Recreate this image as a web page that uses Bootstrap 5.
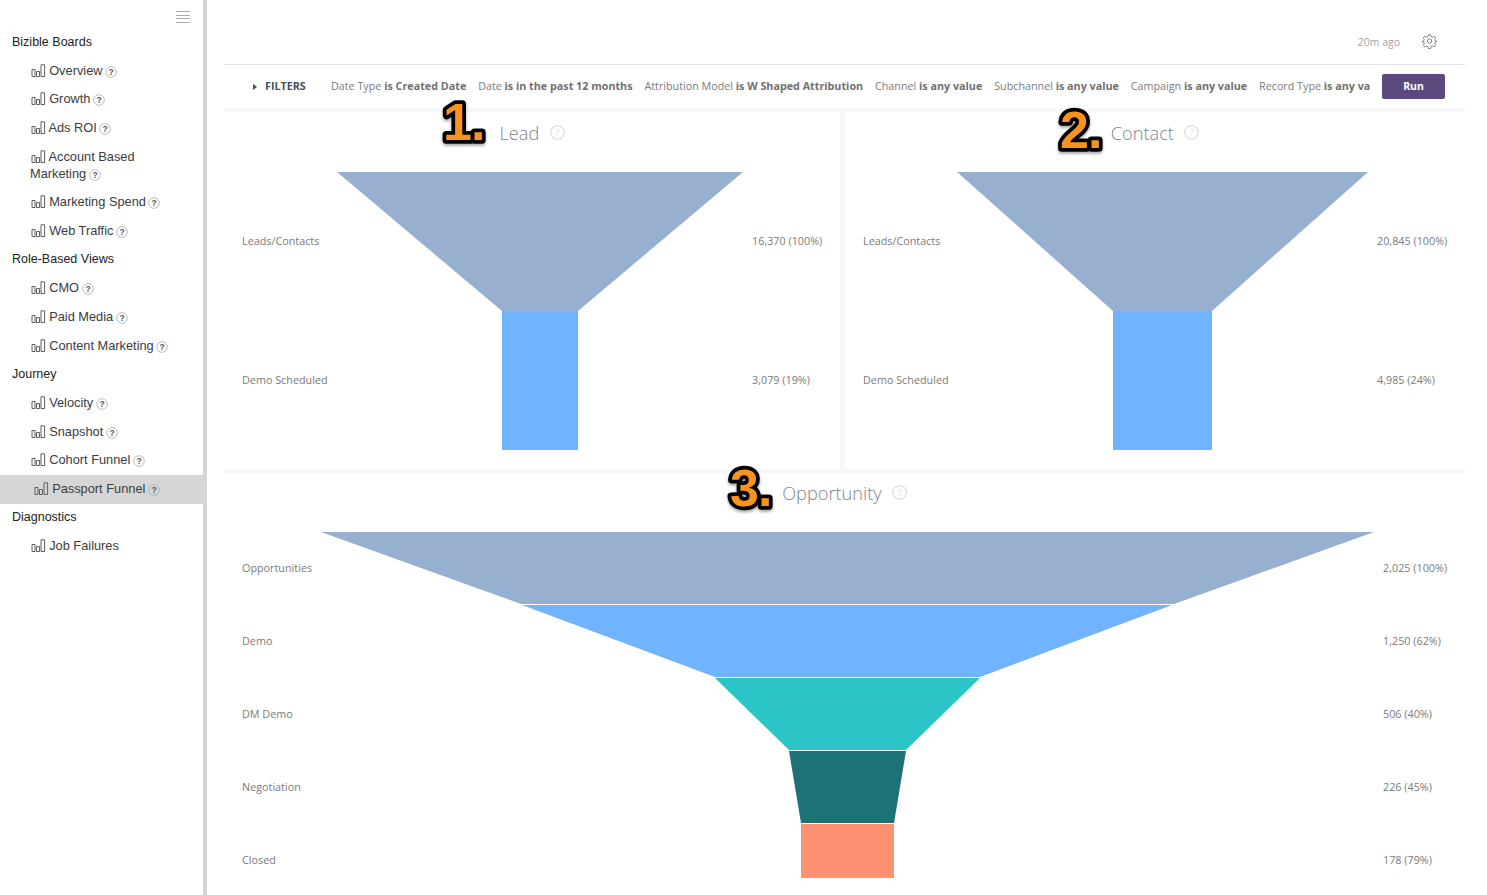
<!DOCTYPE html>
<html lang="en">
<head>
    <meta charset="UTF-8">
    <title>Passport Funnel</title>
    <link href="https://cdn.jsdelivr.net/npm/bootstrap@5.3.0/dist/css/bootstrap.min.css" rel="stylesheet">
    <style>
        body { height: 895px; overflow: hidden; background: #fff; font-family: "Open Sans", sans-serif; color: #7b7b7b; }

        /* sidebar */
        .side { width: 207px; height: 895px; border-right: 4px solid #d6d6d6; font-family: "Liberation Sans", sans-serif; font-size: 12.8px; line-height: 17px; color: #333; flex-shrink: 0; }
        .side-top { height: 28px; padding: 11px 13px 0 0; }
        .side-head { padding: 5.7px 0 6.3px 12px; color: #222; font-size: 12.5px; }
        .side-item { padding: 4.8px 20px 6.8px 30px; color: #3c3c3c; }
        .side-item.active-row { background: #d6d6d6; padding-left: 33px; }
        .bar-ico { width: 15px; height: 13px; vertical-align: -2px; margin-left: 1px; margin-right: -.4px; }
        .help-ico { width: 12px; height: 12px; vertical-align: -3px; margin-left: -1px; }

        /* main */
        .main-area { padding-left: 17px; padding-right: 22px; width: 1280px; }
        .top-strip { height: 65px; border-bottom: 1px solid #e3e3e3; padding: 33px 28px 0 0; font-size: 10.5px; color: #a3a3a3; line-height: 18px; }
        .gear-ico { margin-left: 22px; }
        .filter-strip { height: 43px; padding-left: 29px; padding-right: 20px; font-size: 10.75px; white-space: nowrap; }
        .filter-caret { width: 0; height: 0; border-left: 4px solid #4a4a4a; border-top: 3px solid transparent; border-bottom: 3px solid transparent; margin-right: 8px; }
        .filter-name { font-weight: 700; color: #454f5b; width: 66px; flex-shrink: 0; }
        .filter-list { flex: 1; overflow: hidden; gap: 11.9px; }
        .filter-list b { color: #707070; font-weight: 700; }
        .run-btn { width: 63px; height: 25px; margin-left: 12px; padding: 0; border-radius: 2px; border: 0; background: #5c4a7f; color: #fff; font-size: 10.5px; font-weight: 700; flex-shrink: 0; }

        .gap-band { background: #f6f7f8; }
        .band-top { height: 4px; }
        .two-panels { gap: 5px; height: 357px; }
        .panel { position: relative; background: #fff; }
        .panel-lead { width: 616px; }
        .panel-contact { flex: 1; }
        .panel-title { height: 60px; padding-top: 9px; font-size: 18.2px; line-height: 25px; color: #7f868e; font-weight: 300; }
        .title-help { width: 15px; height: 15px; margin-left: 5.5px; vertical-align: 0; }
        .chart-row { padding-left: 18px; font-size: 10.8px; }
        .chart-col { flex-shrink: 0; }
        .chart-col > div { flex: 1; }
        .col-lead { width: 95px; }
        .col-contact { width: 94px; }
        .col-opp { width: 79px; }
        .val-col { margin-left: 9px; }
        .panel-opp { height: 422px; }
        .panel-opp .panel-title { height: 59px; padding-top: 8px; }

        /* numbered callouts over the panels */
        .callout { position: absolute; width: 60px; height: 60px; overflow: visible; }
        .callout text { font-family: "Liberation Sans", sans-serif; font-weight: 700; font-size: 52px; letter-spacing: -1px; fill: #f7931e; stroke: #000; stroke-width: 7.5px; stroke-linejoin: round; paint-order: stroke fill; filter: drop-shadow(0 2px 1.5px rgba(0,0,0,.35)); }
    </style>
</head>
<body>
    <svg width="0" height="0" class="position-absolute">
        <defs>
            <symbol id="bars" viewBox="0 0 15 13">
                <path d="M1 5.5h3v7H1zM5.5 7.5h3v5h-3zM10 .8h3.6v11.7H10z" fill="none" stroke="#5f5f5f" stroke-width="1"/>
            </symbol>
            <symbol id="help" viewBox="0 0 12 12">
                <circle cx="6" cy="6" r="5.3" fill="none" stroke="#aaa" stroke-width=".8"/>
                <text x="6" y="9" text-anchor="middle" font-size="8.5" font-weight="700" font-family="Liberation Sans, sans-serif" fill="#555">?</text>
            </symbol>
            <symbol id="help-lite" viewBox="0 0 15 15">
                <circle cx="7.5" cy="7.5" r="6.8" fill="none" stroke="#d8d8d8" stroke-width="1.1"/>
                <text x="7.5" y="10.8" text-anchor="middle" font-size="9" font-family="Open Sans, sans-serif" fill="#d0d0d0">?</text>
            </symbol>
        </defs>
    </svg>

    <div class="d-flex">
        <div class="side">
            <div class="side-top d-flex justify-content-end">
                <svg width="14" height="12" viewBox="0 0 14 12"><path d="M0 .5h14M0 4.5h14M0 7.5h14M0 11.5h14" stroke="#a9a9a9" stroke-width="1"/></svg>
            </div>
            <div class="side-head">Bizible Boards</div>
            <div class="side-item"><svg class="bar-ico"><use href="#bars"/></svg> Overview <svg class="help-ico"><use href="#help"/></svg></div>
            <div class="side-item"><svg class="bar-ico"><use href="#bars"/></svg> Growth <svg class="help-ico"><use href="#help"/></svg></div>
            <div class="side-item"><svg class="bar-ico"><use href="#bars"/></svg> Ads ROI <svg class="help-ico"><use href="#help"/></svg></div>
            <div class="side-item"><svg class="bar-ico"><use href="#bars"/></svg> Account Based Marketing <svg class="help-ico"><use href="#help"/></svg></div>
            <div class="side-item"><svg class="bar-ico"><use href="#bars"/></svg> Marketing Spend <svg class="help-ico"><use href="#help"/></svg></div>
            <div class="side-item"><svg class="bar-ico"><use href="#bars"/></svg> Web Traffic <svg class="help-ico"><use href="#help"/></svg></div>
            <div class="side-head">Role-Based Views</div>
            <div class="side-item"><svg class="bar-ico"><use href="#bars"/></svg> CMO <svg class="help-ico"><use href="#help"/></svg></div>
            <div class="side-item"><svg class="bar-ico"><use href="#bars"/></svg> Paid Media <svg class="help-ico"><use href="#help"/></svg></div>
            <div class="side-item"><svg class="bar-ico"><use href="#bars"/></svg> Content Marketing <svg class="help-ico"><use href="#help"/></svg></div>
            <div class="side-head">Journey</div>
            <div class="side-item"><svg class="bar-ico"><use href="#bars"/></svg> Velocity <svg class="help-ico"><use href="#help"/></svg></div>
            <div class="side-item"><svg class="bar-ico"><use href="#bars"/></svg> Snapshot <svg class="help-ico"><use href="#help"/></svg></div>
            <div class="side-item"><svg class="bar-ico"><use href="#bars"/></svg> Cohort Funnel <svg class="help-ico"><use href="#help"/></svg></div>
            <div class="side-item active-row"><svg class="bar-ico"><use href="#bars"/></svg> Passport Funnel <svg class="help-ico"><use href="#help"/></svg></div>
            <div class="side-head">Diagnostics</div>
            <div class="side-item"><svg class="bar-ico"><use href="#bars"/></svg> Job Failures</div>
        </div>

        <div class="main-area">
            <div class="top-strip d-flex justify-content-end">
                <span>20m ago</span>
                <svg class="gear-ico" width="15" height="16" viewBox="0 0 24 24" fill="none" stroke="#777" stroke-width="1.5" stroke-linejoin="round">
                    <circle cx="12" cy="12" r="3.4"/>
                    <path d="M10.2 2h3.6l.6 3 2.5 1.1 2.6-1.7 2.5 2.6-1.7 2.5 1.1 2.6 3 .5v.8l-3 .6-1.1 2.5 1.7 2.6-2.5 2.5-2.6-1.7-2.5 1.1-.6 3h-3.6l-.6-3-2.5-1.1-2.6 1.7-2.5-2.5 1.7-2.6-1.1-2.5-3-.6v-.8l3-.5 1.1-2.6-1.7-2.5L4.5 4.4l2.6 1.7 2.5-1.1z"/>
                </svg>
            </div>
            <div class="filter-strip d-flex align-items-center">
                <span class="filter-caret"></span>
                <span class="filter-name">FILTERS</span>
                <div class="filter-list d-flex">
                    <span>Date Type <b>is Created Date</b></span>
                    <span>Date <b>is in the past 12 months</b></span>
                    <span>Attribution Model <b>is W Shaped Attribution</b></span>
                    <span>Channel <b>is any value</b></span>
                    <span>Subchannel <b>is any value</b></span>
                    <span>Campaign <b>is any value</b></span>
                    <span>Record Type <b>is any value</b></span>
                </div>
                <button class="btn run-btn">Run</button>
            </div>

            <div class="gap-band">
                <div class="band-top"></div>
                <div class="two-panels d-flex">
                    <div class="panel panel-lead">
                        <svg class="callout" style="left: 216px; top: -20px;"><text x="3" y="48">1.</text></svg>
                        <div class="panel-title text-center">Lead <svg class="title-help"><use href="#help-lite"/></svg></div>
                        <div class="chart-row d-flex">
                            <div class="chart-col col-lead d-flex flex-column">
                                <div class="d-flex align-items-center">Leads/Contacts</div>
                                <div class="d-flex align-items-center">Demo Scheduled</div>
                            </div>
                            <svg class="d-block flex-shrink-0" width="406" height="278" viewBox="0 0 406 278">
                                <polygon points="0,0 406,0 241,139 165,139" fill="#98b0cf"/>
                                <rect x="165" y="139" width="76" height="139" fill="#70b3ff"/>
                            </svg>
                            <div class="chart-col val-col d-flex flex-column">
                                <div class="d-flex align-items-center">16,370 (100%)</div>
                                <div class="d-flex align-items-center">3,079 (19%)</div>
                            </div>
                        </div>
                    </div>
                    <div class="panel panel-contact">
                        <svg class="callout" style="left: 212px; top: -12px;"><text x="3" y="48">2.</text></svg>
                        <div class="panel-title text-center">Contact <svg class="title-help"><use href="#help-lite"/></svg></div>
                        <div class="chart-row d-flex">
                            <div class="chart-col col-contact d-flex flex-column">
                                <div class="d-flex align-items-center">Leads/Contacts</div>
                                <div class="d-flex align-items-center">Demo Scheduled</div>
                            </div>
                            <svg class="d-block flex-shrink-0" width="411" height="278" viewBox="0 0 411 278">
                                <polygon points="0,0 411,0 255,139 156,139" fill="#98b0cf"/>
                                <rect x="156" y="139" width="99" height="139" fill="#70b3ff"/>
                            </svg>
                            <div class="chart-col val-col d-flex flex-column">
                                <div class="d-flex align-items-center">20,845 (100%)</div>
                                <div class="d-flex align-items-center">4,985 (24%)</div>
                            </div>
                        </div>
                    </div>
                </div>
                <div class="band-top"></div>
                <div class="panel panel-opp">
                    <svg class="callout" style="left: 503px; top: -15px;"><text x="3" y="48">3.</text></svg>
                    <div class="panel-title text-center">Opportunity <svg class="title-help"><use href="#help-lite"/></svg></div>
                    <div class="chart-row d-flex">
                        <div class="chart-col col-opp d-flex flex-column">
                            <div class="d-flex align-items-center">Opportunities</div>
                            <div class="d-flex align-items-center">Demo</div>
                            <div class="d-flex align-items-center">DM Demo</div>
                            <div class="d-flex align-items-center">Negotiation</div>
                            <div class="d-flex align-items-center">Closed</div>
                        </div>
                        <svg class="d-block flex-shrink-0" width="1053" height="365" viewBox="0 0 1053 365">
                            <polygon points="0,0 1053,0 853,72 200,72" fill="#98b0cf"/>
                            <polygon points="201,73 851,73 659,145 394,145" fill="#70b3ff"/>
                            <polygon points="394,146 659,146 585,218 468,218" fill="#2cc5c7"/>
                            <polygon points="468,219 585,219 573,291 480,291" fill="#1c7275"/>
                            <rect x="480" y="292" width="93" height="54" fill="#ff9173"/>
                        </svg>
                        <div class="chart-col val-col d-flex flex-column">
                            <div class="d-flex align-items-center">2,025 (100%)</div>
                            <div class="d-flex align-items-center">1,250 (62%)</div>
                            <div class="d-flex align-items-center">506 (40%)</div>
                            <div class="d-flex align-items-center">226 (45%)</div>
                            <div class="d-flex align-items-center">178 (79%)</div>
                        </div>
                    </div>
                </div>
            </div>
        </div>
    </div>
</body>
</html>
